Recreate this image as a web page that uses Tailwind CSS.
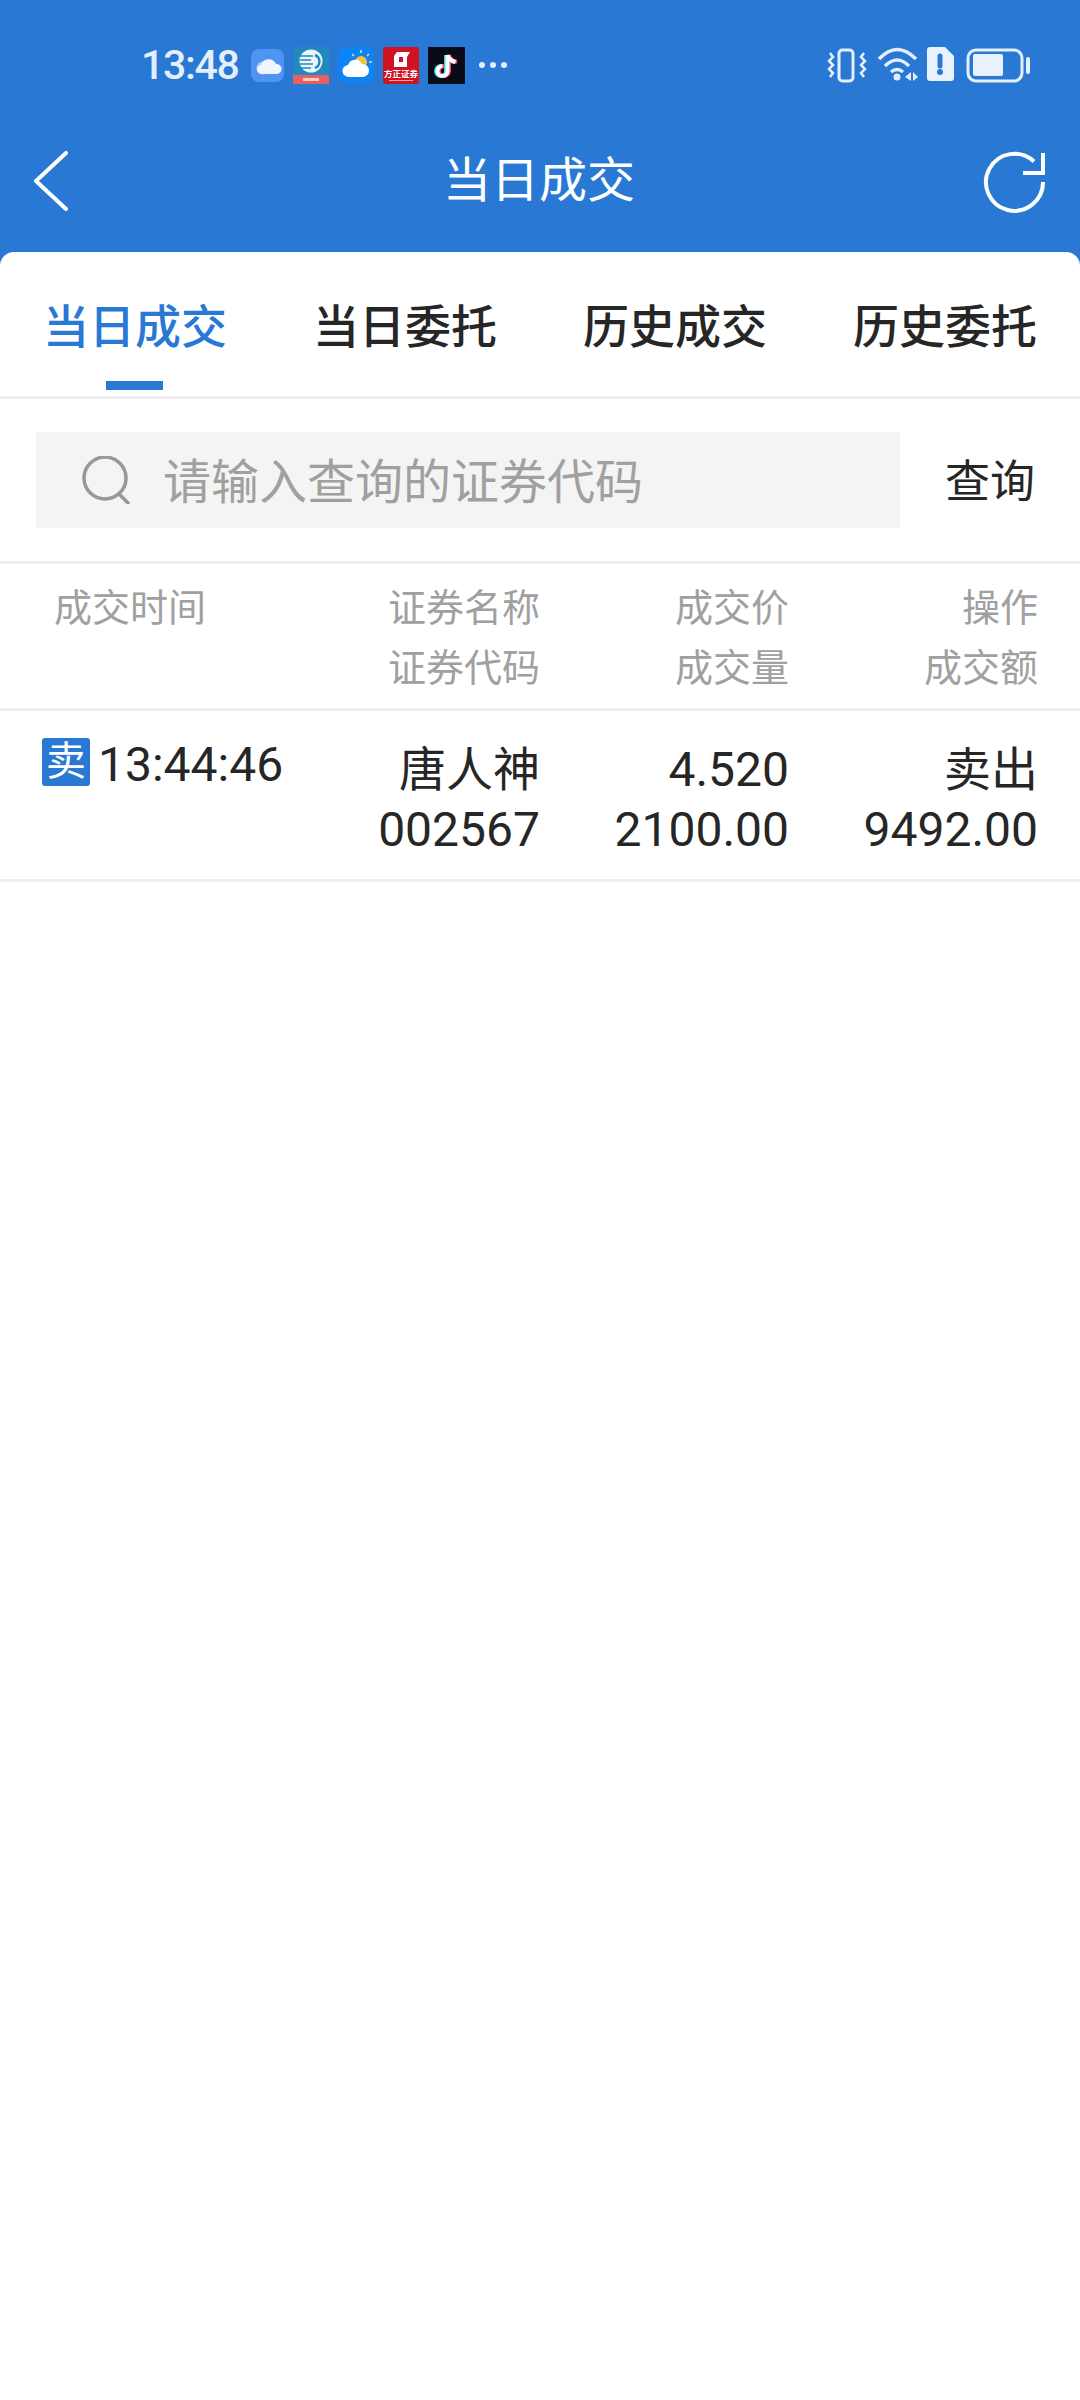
<!DOCTYPE html>
<html lang="zh">
<head>
  <meta charset="UTF-8">
  <title>当日成交</title>
  <script src="https://cdn.jsdelivr.net/npm/@tailwindcss/browser@4"></script>
</head>
<body class="w-[1080px] h-[2400px] overflow-hidden bg-[#2878d4] text-[#262626] font-['Roboto','Noto_Sans_CJK_SC',sans-serif]">
  <!-- status bar -->
  <div class="h-[96px] pl-[141px] pr-[48px] pt-[46px] flex items-start justify-between text-[#e4effb]">
    <div class="flex items-center h-[38px]">
      <span class="text-[41px] font-medium leading-none w-[110px] tracking-[-1.3px]">13:48</span>
      <div class="flex items-center gap-[9px]">
        <svg width="33" height="33" viewBox="0 0 33 33"><rect width="33" height="33" rx="8" fill="#4f93f3"/><circle cx="12" cy="19" r="6.500" fill="#a9cdf8"/><path d="M11 25a4.500 4.500 0 0 1-1-9 8 8 0 0 1 15-1 5 5 0 0 1 1 10z" fill="#eef6ff"/></svg>
        <svg width="36" height="37" viewBox="0 0 36 37"><rect width="36" height="37" fill="#2189bd"/><rect y="28" width="36" height="9" fill="#e5605f"/><rect x="10" y="31" width="16" height="3" fill="#f7c8c4"/><circle cx="18" cy="14" r="11.500" fill="#e9f6fa"/><path d="M7 9h13M7 13h11M7 17h13M7 21h11" stroke="#2189bd" stroke-width="1.500"/><path d="M22 8a7 7 0 0 1 0 13" fill="none" stroke="#2189bd" stroke-width="2.500"/></svg>
        <svg width="36" height="36" viewBox="0 0 36 36"><rect width="36" height="36" rx="8" fill="#0c84f6"/><circle cx="23" cy="15" r="6" fill="#f3bf47"/><path d="M23 3v3M31 7l-2 2M34 15h-3M14 7l2 2" stroke="#f6dc8a" stroke-width="1.500"/><path d="M11 30a6 6 0 0 1-1-12 7.500 7.500 0 0 1 14-1 6.500 6.500 0 0 1 1 13z" fill="#fff"/></svg>
        <svg width="36" height="37" viewBox="0 0 36 37"><rect width="36" height="37" rx="3" fill="#cf1322"/><path d="M14 5h13l-3 5v10H11V9z" fill="#fff"/><path d="M16 10h4v5h-4z" fill="#cf1322"/><text x="18" y="30" text-anchor="middle" font-size="8.500" font-weight="700" fill="#fff" font-family="Noto Sans CJK SC">方正证券</text><rect x="6" y="33" width="24" height="1" fill="#f1a7ac"/></svg>
        <svg width="37" height="37" viewBox="0 0 37 37"><rect width="37" height="37" rx="1" fill="#0a0b18"/><path d="M18 8v16a5 5 0 1 1-5-5M18 8c1 4 4 6 8 7" fill="none" stroke="#36d7dc" stroke-width="4"/><path d="M21 8v16a5 5 0 1 1-5-5M21 8c1 4 4 6 8 7" fill="none" stroke="#f2476b" stroke-width="4"/><path d="M19.500 8v16a5 5 0 1 1-5-5M19.500 8c1 4 4 6 8 7" fill="none" stroke="#fff" stroke-width="4"/></svg>
      </div>
      <div class="flex gap-[5px] ml-[14px]">
        <span class="w-[6px] h-[6px] rounded-full bg-[#e4effb]"></span>
        <span class="w-[6px] h-[6px] rounded-full bg-[#e4effb]"></span>
        <span class="w-[6px] h-[6px] rounded-full bg-[#e4effb]"></span>
      </div>
    </div>
    <svg width="206" height="38" viewBox="0 0 206 38" fill="none" stroke="#e4effb">
      <rect x="13" y="4" width="14" height="31" rx="3.500" stroke-width="3"/>
      <path d="M4 7l3 4-4 4 4 4-4 4 4 4-3 4M38 7l-3 4 4 4-4 4 4 4-4 4 3 4" stroke-width="2.500"/>
      <path d="M53 13Q71-6 90 13M59 20Q71 8 83 20M65 26Q71 21 77 26" stroke-width="3.500"/>
      <circle cx="71" cy="31" r="3.500" fill="#e4effb" stroke="none"/>
      <path d="M79 31l6-5v9zM87 26l5 5-5 4z" fill="#e4effb" stroke="none"/>
      <path d="M104 1h15l9 9v22a3 3 0 0 1-3 3h-21a3 3 0 0 1-3-3v-28a3 3 0 0 1 3-3z" fill="#e8f1fc" stroke="none"/>
      <path d="M114 10v10" stroke="#2878d4" stroke-width="5" stroke-linecap="round"/>
      <circle cx="114" cy="26" r="3" fill="#2878d4" stroke="none"/>
      <rect x="142" y="4" width="54" height="31" rx="8" stroke-width="3"/>
      <rect x="147" y="8" width="30" height="22" rx="2" fill="#e8f1fc" stroke="none"/>
      <rect x="200" y="11" width="4" height="17" rx="2" fill="#e4effb" stroke="none"/>
    </svg>
  </div>

  <!-- title bar -->
  <div class="relative h-[156px] flex items-start justify-between pl-[33px] pr-[35px] pt-[55px]">
    <svg width="36" height="60" viewBox="0 0 36 60" fill="none" stroke="#fff" stroke-width="4" stroke-linecap="round" stroke-linejoin="round"><path d="M33 2L3 30l30 28"/></svg>
    <span class="absolute left-0 right-0 top-[53px] text-center text-white text-[48px] leading-[64px] pr-[2px]">当日成交</span>
    <svg width="62" height="62" viewBox="0 0 62 62" fill="none" stroke="#fff" stroke-width="4"><path d="M60 31a28.500 28.500 0 1 1-9-20.500M60 2v20H40"/></svg>
  </div>

  <!-- content panel -->
  <main class="bg-white rounded-t-[14px] h-[2148px]">
    <div class="h-[147px] border-b-[3px] border-[#eeeeee] grid grid-cols-4 pt-[37px] text-[46px] leading-[76px] font-medium text-center">
      <div class="relative text-[#2878d4]">
        <span>当日成交</span>
        <span class="absolute left-[106px] top-[92px] w-[57px] h-[9px] bg-[#2878d4]"></span>
      </div>
      <div>当日委托</div>
      <div>历史成交</div>
      <div>历史委托</div>
    </div>

    <div class="h-[165px] border-b-[3px] border-[#eeeeee] pl-[36px] pt-[33px] flex items-start">
      <div class="w-[864px] h-[96px] bg-[#f4f4f4] flex items-center pl-[45px]">
        <svg width="52" height="48" viewBox="0 0 52 48" fill="none" stroke="#989898" stroke-width="3.500"><circle cx="24" cy="22" r="21"/><path d="M38 38l9 9" stroke-linecap="round"/></svg>
        <span class="ml-[30px] mt-[5px] text-[48px] leading-[64px] text-[#a0a0a0]">请输入查询的证券代码</span>
      </div>
      <button class="ml-[45px] h-[96px] pt-[5px] text-[45px] text-[#262626]">查询</button>
    </div>

    <!-- table head -->
    <div class="h-[147px] border-b-[3px] border-[#eeeeee] grid grid-cols-[360px_180px_249px_249px] pt-[14px] text-[38px] leading-[60px] text-[#a0a0a0] text-right">
      <div class="pl-[54px] text-left">成交时间</div>
      <div>证券名称<br>证券代码</div>
      <div>成交价<br>成交量</div>
      <div>操作<br>成交额</div>
    </div>

    <!-- trade row -->
    <div class="h-[171px] border-b-[3px] border-[#eeeeee] grid grid-cols-[360px_180px_249px_249px] text-[48px] leading-[60px] text-right">
      <div class="pl-[42px] pt-[27px] flex items-start text-left">
        <span class="w-[48px] h-[48px] rounded-[3px] bg-[#2878d4] text-white text-[40px] leading-[48px] text-center">卖</span>
        <span class="ml-[8px] mt-[3px] leading-[48px]">13:44:46</span>
      </div>
      <div class="pt-[29px]"><span class="text-[47px]">唐人神</span><br>002567</div>
      <div class="pt-[29px]">4.520<br>2100.00</div>
      <div class="pt-[29px]"><span class="text-[47px]">卖出</span><br>9492.00</div>
    </div>
  </main>
</body>
</html>
